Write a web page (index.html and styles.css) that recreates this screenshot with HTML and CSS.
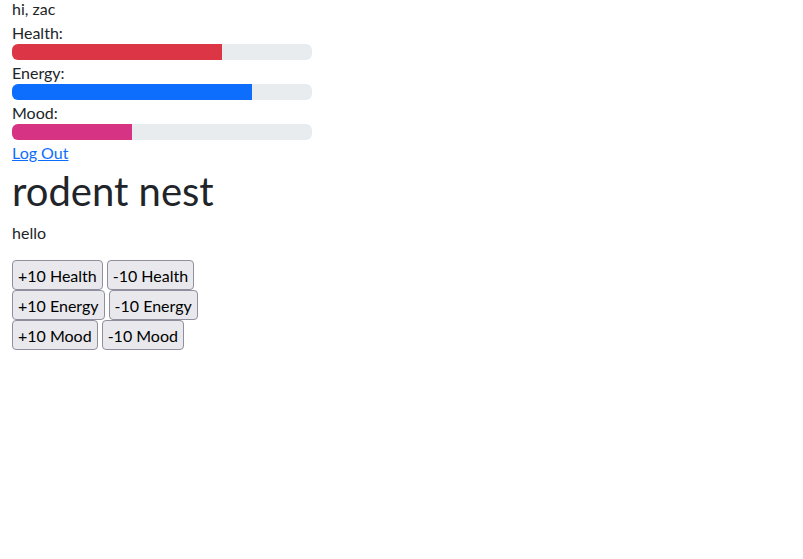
FILE: index.html
```html
<!DOCTYPE html>
<html>
<head>
<meta charset="utf-8">
<title>rodent nest</title>
<link rel="stylesheet" href="styles.css">
</head>
<body>
<div class="container">
  <div class="greeting">hi, zac</div>
  <div class="stat">
    <div class="stat-label">Health:</div>
    <div class="progress"><div class="progress-bar bar-health" style="width: 70%"></div></div>
  </div>
  <div class="stat">
    <div class="stat-label">Energy:</div>
    <div class="progress"><div class="progress-bar bar-energy" style="width: 80%"></div></div>
  </div>
  <div class="stat">
    <div class="stat-label">Mood:</div>
    <div class="progress"><div class="progress-bar bar-mood" style="width: 40%"></div></div>
  </div>
  <div class="logout-row"><a class="logout" href="#">Log Out</a></div>
  <h1 class="title">rodent nest</h1>
  <p class="message">hello</p>
  <div class="actions">
    <div class="action-row"><button class="btn">+10 Health</button><button class="btn">-10 Health</button></div>
    <div class="action-row"><button class="btn">+10 Energy</button><button class="btn">-10 Energy</button></div>
    <div class="action-row"><button class="btn">+10 Mood</button><button class="btn">-10 Mood</button></div>
  </div>
</div>
</body>
</html>
```
FILE: styles.css
```css
html, body {
  margin: 0;
  padding: 0;
  background: #fff;
}
body {
  font-family: Lato, "Liberation Sans", sans-serif;
  font-size: 16px;
  line-height: 24px;
  color: #212529;
}
.container {
  padding: 0 12px;
}
.greeting {
  line-height: 18px;
  height: 20px;
}
.stat-label {
  box-sizing: border-box;
  height: 24px;
  padding-top: 1px;
  line-height: 23px;
}
.progress {
  width: 300px;
  height: 16px;
  background: #e9ecef;
  border-radius: 6px;
  overflow: hidden;
  display: flex;
}
.progress-bar {
  height: 100%;
}
.bar-health { background: #dc3545; }
.bar-energy { background: #0d6efd; }
.bar-mood { background: #d63384; }
.logout-row {
  box-sizing: border-box;
  height: 24px;
  padding-top: 1px;
  line-height: 23px;
}
.logout {
  color: #0d6efd;
  text-decoration: underline;
}
.title {
  margin: 3px 0 5px;
  font-size: 40px;
  line-height: 48px;
  font-weight: 400;
}
.message {
  margin: 0 0 15px;
  padding-top: 1px;
}
.actions {
  display: flex;
  flex-direction: column;
}
.action-row {
  display: flex;
  gap: 4px;
}
.btn {
  font-family: inherit;
  font-size: 16px;
  line-height: 24px;
  color: #000;
  background: #e9e9ed;
  border: 1px solid #8f8f9d;
  border-radius: 4px;
  padding: 3px 5px 1px;
  margin: 0;
}
```
